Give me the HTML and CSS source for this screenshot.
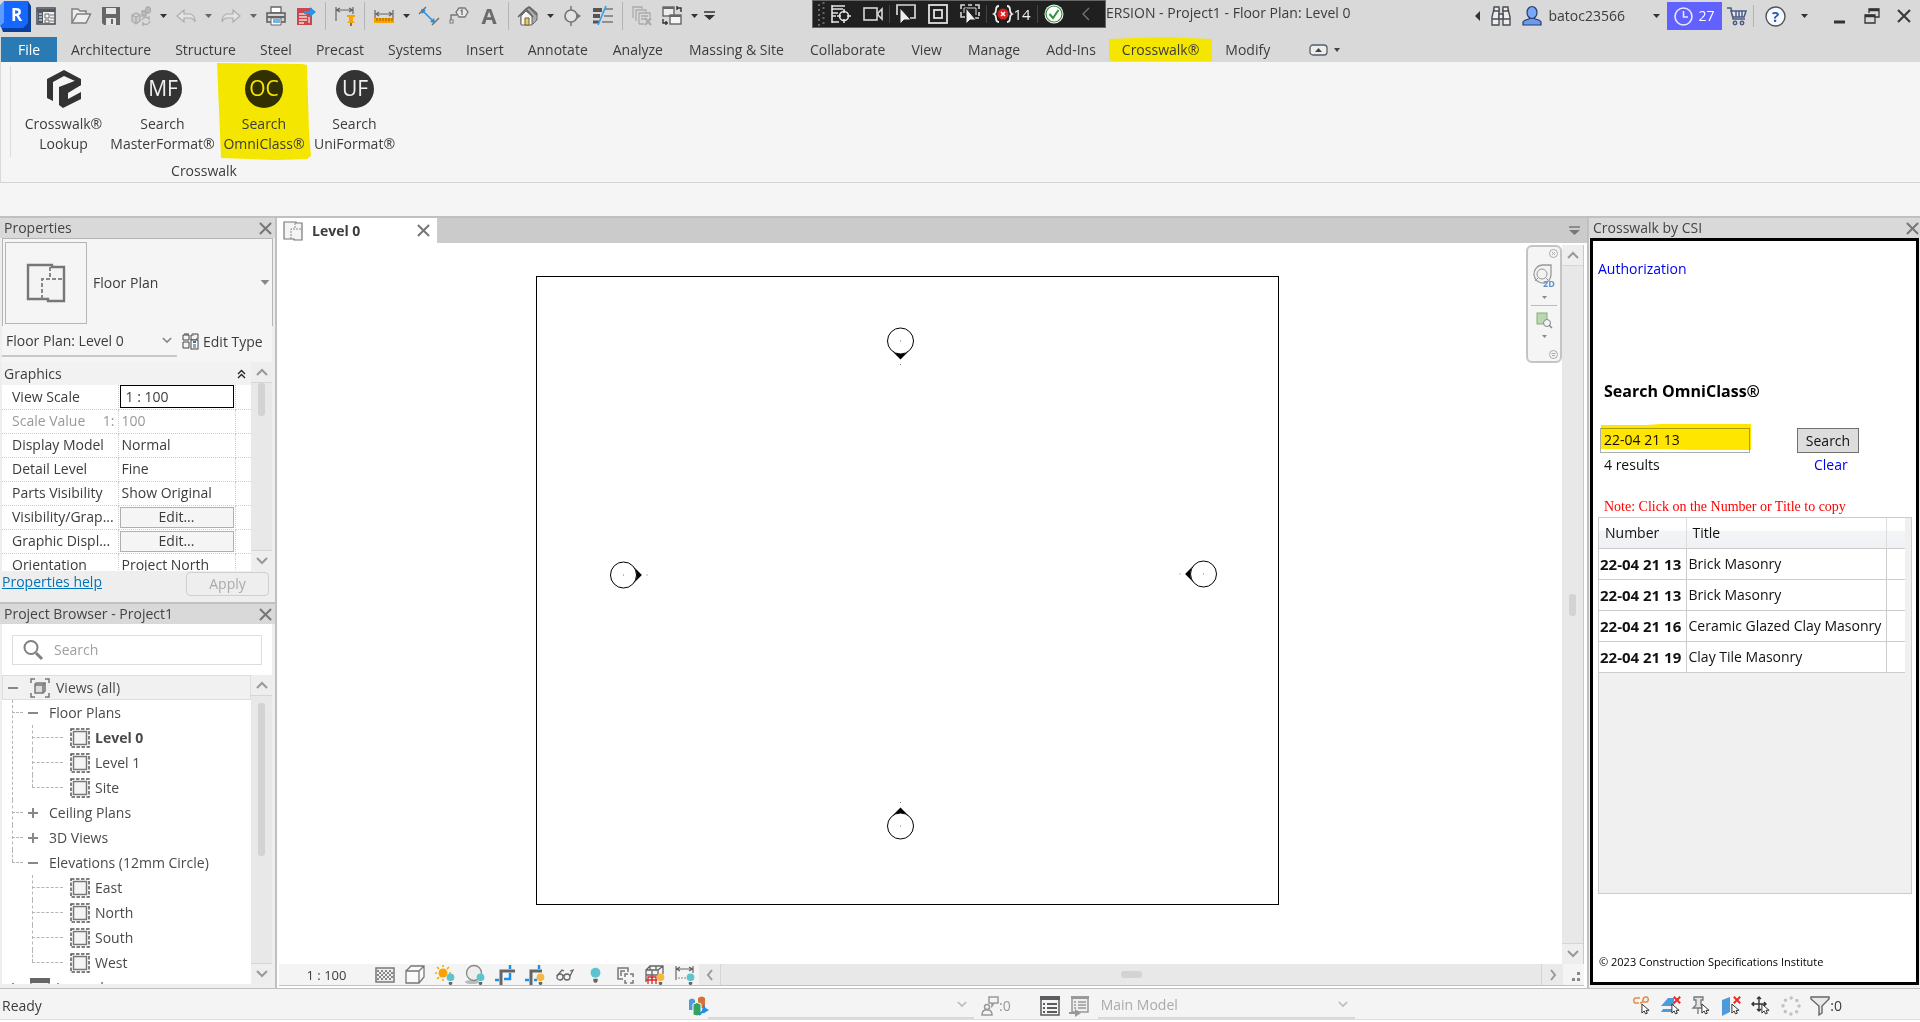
FILE: index.html
```html
<!DOCTYPE html>
<html lang="en">
<head>
  <meta charset="UTF-8">
  <title>Project1 - Floor Plan: Level 0</title>
  <meta name="viewport" content="width=device-width, initial-scale=1">
  <link rel="stylesheet" href="styles.css">
</head>
<body>
  <!-- shared icons -->
  <svg class="defs" aria-hidden="true">
    <symbol id="caret" viewBox="0 0 7 4"><path d="M0 0h7L3.500 4z" fill="currentColor"/></symbol>
    <symbol id="close" viewBox="0 0 14 14"><path d="M1 1l12 12M13 1L1 13" stroke="currentColor" stroke-width="2.200" fill="none"/></symbol>
    <symbol id="up" viewBox="0 0 12 8"><path d="M1 7l5-5 5 5" stroke="currentColor" stroke-width="2" fill="none"/></symbol>
    <symbol id="down" viewBox="0 0 12 8"><path d="M1 1l5 5 5-5" stroke="currentColor" stroke-width="2" fill="none"/></symbol>
    <symbol id="plan" viewBox="0 0 20 20"><path d="M1 1h12v1h6v17h-8v-1H1z" fill="#f4f4f4" stroke="#777" stroke-width="1.200"/><path d="M8 18V8h11M12 2v6" fill="none" stroke="#888" stroke-dasharray="2 1"/></symbol>
    <symbol id="view" viewBox="0 0 20 20"><rect x="1" y="1" width="18" height="18" fill="none" stroke="#555" stroke-width="1.500" stroke-dasharray="3.500 1.500"/><rect x="3.500" y="3.500" width="13" height="13" fill="#f4f4f4" stroke="#777" stroke-width="1.500"/></symbol>
    <symbol id="bulb" viewBox="0 0 10 14"><circle cx="5" cy="5" r="4.500" fill="currentColor"/><path d="M3 10.500h4v2L6 14H4l-1-1.500z" fill="#666"/></symbol>
    <symbol id="cursor" viewBox="0 0 10 13"><path d="M1 1v10l2.500-2.300L5 12l2-.8L5.600 8H9z" fill="#fff" stroke="#333" stroke-width="1.100"/></symbol>
    <symbol id="redx" viewBox="0 0 8 8"><path d="M.8.8l6.400 6.400M7.200.8L.8 7.200" stroke="#f02828" stroke-width="2"/></symbol>
  </svg>

  <header class="top">
    <div class="title-row">
      <div class="qat">
        <button class="logo" aria-label="Application menu">
          <svg width="31" height="31" viewBox="0 0 31 31"><path d="M3 4L7 0h21l3 5v26H3l-3-8z" fill="#0a3f9c"/><path d="M0 25V4l4-4v22z" fill="#5e9bff"/><path d="M4 0h24v22L23 27H2L0 25l4-3z" fill="#1667ff"/><text x="11" y="20" class="logo-letter">R</text></svg>
        </button>
        <button class="tool wide" aria-label="Home"><svg width="20" height="20" viewBox="0 0 20 20"><rect x="1" y="2" width="18" height="16" fill="#eee" stroke="#444b54" stroke-width="1.500"/><path d="M1 3h18v3H1zM2 6h5v11H2z" fill="#505864"/><path d="M3 8h3M3 11h3M3 14h3" stroke="#fff"/><path d="M9 8h4v4H9zM9 14h4v3H9z" fill="#fff" stroke="#666"/><path d="M14 9h4M14 12h4M14 15h4" stroke="#777"/></svg></button>
        <button class="tool" aria-label="Open"><svg width="20" height="20" viewBox="0 0 20 20"><path d="M1 17V3h6l2 2h6v3" fill="#eee" stroke="#808080" stroke-width="1.500"/><path d="M1 17L6 8h13.500L15 17z" fill="#eee" stroke="#808080" stroke-width="1.500"/></svg></button>
        <button class="tool" aria-label="Save"><svg width="20" height="20" viewBox="0 0 20 20"><path d="M1 1h18v18H3l-2-2z" fill="#666"/><path d="M5 2h10v6H5zM5 12h10v7H5z" fill="#e6e6e6"/><path d="M10 13h2v5h-2z" fill="#666"/></svg></button>
        <button class="tool" aria-label="Synchronize"><svg width="20" height="20" viewBox="0 0 20 20" fill="none" stroke="#acacac" stroke-width="1.300"><path d="M1 9l4-2 4 2v6l-4 3-4-3zM1 9l4 2 4-2M5 11v7" fill="#ccc"/><path d="M11 5h4v5h-4z" fill="#bbb"/><ellipse cx="17" cy="4" rx="2.500" ry="3" fill="#bbb"/><path d="M11 14a4 4 0 0 1 7-1v-3M19 15a4 4 0 0 1-7 2v3"/></svg></button>
        <button class="drop" aria-label="Synchronize options"><svg width="7" height="4"><use href="#caret"/></svg></button>
        <button class="tool" aria-label="Undo"><svg width="20" height="20" viewBox="0 0 20 20"><path d="M1 10l7-6v4h6q5 1 5 8-2-4-5-4H8v4z" fill="#e3e3e3" stroke="#adadad" stroke-width="1.200"/></svg></button>
        <button class="drop dim" aria-label="Undo list"><svg width="7" height="4"><use href="#caret"/></svg></button>
        <button class="tool" aria-label="Redo"><svg width="20" height="20" viewBox="0 0 20 20"><path d="M19 10l-7-6v4H6q-5 1-5 8 2-4 5-4h6v4z" fill="#e3e3e3" stroke="#adadad" stroke-width="1.200"/></svg></button>
        <button class="drop dim" aria-label="Redo list"><svg width="7" height="4"><use href="#caret"/></svg></button>
        <button class="tool" aria-label="Print"><svg width="20" height="20" viewBox="0 0 20 20"><path d="M5 1h10v6H5z" fill="#fff" stroke="#666" stroke-width="1.300"/><rect x="1" y="7" width="18" height="9" fill="#d5d5d5" stroke="#5b5b5b" stroke-width="1.500"/><path d="M1 11h18" stroke="#666" stroke-width="2"/><path d="M5 12h10v7H5z" fill="#fff" stroke="#666"/><path d="M7 13h7v4H7z" fill="#6bb7ef"/></svg></button>
        <button class="tool" aria-label="Export PDF"><svg width="20" height="20" viewBox="0 0 20 20"><path d="M1 2h15v17H1z" fill="#c9484d"/><path d="M3 8h7M3 11h8M3 14h8M3 17h5M13 11v6" stroke="#f7dada" stroke-width="1.300"/><path d="M8 5h6V1l6 5-6 5V8H8z" fill="#2693ea"/></svg></button>
        <span class="sep"></span>
        <button class="tool" aria-label="Aligned dimension"><svg width="20" height="20" viewBox="0 0 20 20" fill="none"><path d="M1 1v14M18 1v7M1 4h17M5 2L1.500 4 5 6M14 2l3.500 2L14 6" stroke="#666" stroke-width="1.200"/><path d="M12 9h8v2h-2v4l2 2h-8l2-2v-4h-2z" fill="#f7a400"/><path d="M16 17v3" stroke="#555" stroke-width="1.500"/></svg></button>
        <span class="sep"></span>
        <button class="tool" aria-label="Measure"><svg width="20" height="20" viewBox="0 0 20 20"><path d="M1 4v8M19 4v8M1 8h18M5 6L2 8l3 2M15 6l3 2-3 2" stroke="#666" stroke-width="1.200" fill="none"/><path d="M0 12h20v5H0z" fill="#f7a400"/><path d="M3 12v3M6 12v3M9 12v3M12 12v3M15 12v3M18 12v3" stroke="#8d5d00"/></svg></button>
        <button class="drop" aria-label="Measure options"><svg width="7" height="4"><use href="#caret"/></svg></button>
        <button class="tool" aria-label="Dimension"><svg width="20" height="20" viewBox="0 0 20 20" fill="none"><path d="M4 5l10 10" stroke="#1c8fe8" stroke-width="1.500"/><path d="M2 3l5 1-4 4zM16 17l-5-1 4-4z" fill="#1c8fe8"/><path d="M0 8l7-7M13 19l7-7" stroke="#707070" stroke-width="1.500"/></svg></button>
        <button class="tool" aria-label="Tag by category"><svg width="20" height="20" viewBox="0 0 20 20"><path d="M2 16V9h6" fill="none" stroke="#777" stroke-width="1.400"/><rect x="1" y="14" width="3" height="3" fill="#eee" stroke="#777"/><path d="M10 2h6l3 4-3 5h-6L7 6z" fill="#e7e7e7" stroke="#777" stroke-width="1.300"/><path d="M11.500 5L13 4v5" fill="none" stroke="#666" stroke-width="1.200"/></svg></button>
        <button class="tool" aria-label="Text"><svg width="20" height="20" viewBox="0 0 20 20"><text x="10" y="18" text-anchor="middle" class="glyph-a">A</text></svg></button>
        <span class="sep"></span>
        <button class="tool" aria-label="Default 3D view"><svg width="20" height="20" viewBox="0 0 20 20"><path d="M3 9v9h12l4-4V7L12 1 8 3z" fill="#aaa" stroke="#666"/><path d="M3 10l5-5 6 5v9H3z" fill="#f5f5f5" stroke="#666"/><path d="M0 11l8-8 7 8M8 3l3-2 8 8" fill="none" stroke="#666" stroke-width="1.600"/><path d="M7 12h4v7H7z" fill="#eacb62" stroke="#6b6033"/></svg></button>
        <button class="drop" aria-label="View options"><svg width="7" height="4"><use href="#caret"/></svg></button>
        <button class="tool" aria-label="Section"><svg width="20" height="20" viewBox="0 0 20 20"><path d="M8 3l10 7-10 7z" fill="#777"/><circle cx="8" cy="10" r="6" fill="#e3e3e3" stroke="#777" stroke-width="1.700"/><path d="M8 0v4M8 16v4" stroke="#777" stroke-width="1.500"/></svg></button>
        <button class="tool" aria-label="Thin lines"><svg width="20" height="20" viewBox="0 0 20 20"><path d="M0 4h9M0 10h7" stroke="#555" stroke-width="4"/><path d="M0 16h6" stroke="#555" stroke-width="3"/><path d="M12 3h8M11 10h9M9 16h11" stroke="#777" stroke-width="1.300"/><path d="M13 0L5 19" stroke="#3a9fe8" stroke-width="1.700"/></svg></button>
        <span class="sep"></span>
        <button class="tool" aria-label="Close inactive views"><svg width="20" height="20" viewBox="0 0 20 20" fill="none" stroke="#ababab" stroke-width="1.300"><path d="M1 12V1h9v2M4 15V4h10v3"/><path d="M7 18V7h11v4M9 10h7M9 13h4M7 18h5"/><path d="M13 12l6 7M19 12l-6 7" stroke-width="2.200"/></svg></button>
        <button class="tool" aria-label="Switch windows"><svg width="20" height="20" viewBox="0 0 20 20"><rect x="1" y="1" width="11" height="9" fill="#eee" stroke="#666" stroke-width="1.400"/><rect x="8" y="9" width="11" height="9" fill="#f5f5f5" stroke="#666" stroke-width="1.400"/><path d="M8 10h11M1 2h11" stroke="#666" stroke-width="2"/><path d="M15 2h4v4M1 13v4h5M15 0v4M4 15v4" fill="none" stroke="#333" stroke-width="1.400"/></svg></button>
        <button class="drop" aria-label="Window list"><svg width="7" height="4"><use href="#caret"/></svg></button>
        <button class="drop" aria-label="Customize toolbar"><svg width="11" height="10" viewBox="0 0 11 10"><path d="M0 1h11" stroke="#333" stroke-width="1.500"/><path d="M0 4h11L5.500 9z" fill="#333"/></svg></button>
      </div>

      <div class="recorder">
        <svg class="grip" width="7" height="24" viewBox="0 0 7 24"><path d="M1 2v22M5.500 0v24" stroke="#666" stroke-width="2" stroke-dasharray="2 3"/></svg>
        <button aria-label="Capture settings"><svg width="20" height="20" viewBox="0 0 20 20" fill="none" stroke="#e4e4e4" stroke-width="1.600"><path d="M1 2h13M1 5h11M1 9h6M1 12h4M1 18h7M1 1v18" /><circle cx="13" cy="12" r="4.500"/><path d="M13 5v4M13 15v4M6 12h4M16 12h4"/></svg></button>
        <button aria-label="Record video"><svg width="20" height="20" viewBox="0 0 20 20" fill="none" stroke="#d8d8d8" stroke-width="1.600"><rect x="1" y="4" width="13" height="12"/><path d="M15 9l4-4v10l-4-4z"/></svg></button>
        <span class="rec-sep"></span>
        <button aria-label="Capture window"><svg width="20" height="20" viewBox="0 0 20 20"><path d="M1 11V1h18v13h-5" fill="none" stroke="#d8d8d8" stroke-width="1.700"/><path d="M4 4v16l4-4h7z" fill="#eee" stroke="#202020"/></svg></button>
        <button aria-label="Capture area"><svg width="20" height="20" viewBox="0 0 20 20" fill="none" stroke="#e0e0e0" stroke-width="1.800"><rect x="1" y="1" width="18" height="18"/><rect x="6" y="6" width="8" height="8"/></svg></button>
        <button aria-label="Capture selection"><svg width="20" height="20" viewBox="0 0 20 20"><path d="M1 5V1h4M8 1h4M15 1h4v4M19 8v4M1 8v5h4M15 14h4" fill="none" stroke="#d8d8d8" stroke-width="1.600"/><path d="M4 9V4h12v7" fill="none" stroke="#d8d8d8"/><path d="M6 4v16l4-4h6z" fill="#eee" stroke="#202020"/></svg></button>
        <span class="rec-sep"></span>
        <button class="errors" aria-label="14 errors"><svg width="20" height="20" viewBox="0 0 20 20"><path d="M6 2Q3 2 3 6q0 3-2 4 2 1 2 4 0 4 3 4M14 2q3 0 3 4 0 3 2 4-2 1-2 4 0 4-3 4" fill="none" stroke="#eee" stroke-width="1.800"/><circle cx="10" cy="10" r="5.500" fill="#e02020"/><path d="M8 8l4 4M12 8l-4 4" stroke="#fff" stroke-width="1.500"/></svg>14</button>
        <span class="rec-sep"></span>
        <button aria-label="Done"><svg width="20" height="20" viewBox="0 0 20 20"><circle cx="10" cy="10" r="9.500" fill="#fff"/><circle cx="10" cy="10" r="8" fill="#fff" stroke="#32953b" stroke-width="1.200"/><path d="M5.500 10l3.500 4 5.500-8" fill="none" stroke="#32953b" stroke-width="2"/></svg></button>
        <button aria-label="Collapse"><svg width="8" height="14" viewBox="0 0 8 14"><path d="M7 1L1 7l6 6" fill="none" stroke="#777" stroke-width="1.300"/></svg></button>
      </div>

      <p class="doc-title">ERSION - Project1 - Floor Plan: Level 0</p>

      <div class="account">
        <button class="collapse" aria-label="Collapse info"><svg width="5" height="10" viewBox="0 0 5 10"><path d="M5 0v10L0 5z" fill="#333"/></svg></button>
        <button aria-label="Find"><svg width="20" height="20" viewBox="0 0 20 20" fill="#eee" stroke="#4a4f55" stroke-width="1.400"><path d="M3 3l-2 8v8h7V3zM17 3l2 8v8h-7V3z"/><path d="M3 1h5v4H3zM12 1h5v4h-5zM8 8h4v5H8zM1 13h7M12 13h7"/></svg></button>
        <button class="user"><svg width="20" height="20" viewBox="0 0 20 20"><path d="M1 19v-3q1-2 6-3l1-2h4l1 2q5 1 6 3v3z" fill="#6b9af0" stroke="#263c68" stroke-width="1.200"/><ellipse cx="10" cy="6.500" rx="5" ry="6" fill="#79a6f7" stroke="#263c68" stroke-width="1.200"/></svg>batoc23566</button>
        <button class="drop" aria-label="Account menu"><svg width="7" height="4"><use href="#caret"/></svg></button>
        <button class="trial"><svg width="19" height="19" viewBox="0 0 19 19" fill="none" stroke="#e8e8ff" stroke-width="1.600"><circle cx="9.500" cy="9.500" r="8.500"/><path d="M9.500 4v6H14"/></svg>27</button>
        <button aria-label="Store"><svg width="20" height="20" viewBox="0 0 20 20" fill="none" stroke="#4c5b84" stroke-width="1.500"><path d="M0 2h4l2 11h12"/><path d="M4 5h15l-2 6H6zM9 5v6M12 5v6M15 5v6" fill="#e5eaf5"/><circle cx="8" cy="17" r="1.700"/><circle cx="15" cy="17" r="1.700"/></svg></button>
        <span class="sep"></span>
        <button aria-label="Help"><svg width="21" height="21" viewBox="0 0 21 21"><circle cx="10.500" cy="10.500" r="9.500" fill="#f7f9fc" stroke="#4a5460" stroke-width="1.400"/><text x="10.500" y="16" text-anchor="middle" class="glyph-q">?</text></svg></button>
        <button class="drop" aria-label="Help menu"><svg width="7" height="4"><use href="#caret"/></svg></button>
        <div class="window-buttons">
          <button aria-label="Minimize"><svg width="16" height="16" viewBox="0 0 16 16"><path d="M3 14h11" stroke="#333" stroke-width="3"/></svg></button>
          <button aria-label="Restore"><svg width="16" height="16" viewBox="0 0 16 16" fill="none" stroke="#333" stroke-width="1.300"><path d="M5 5V1h10v8h-4"/><path d="M5 2h10M1 8h10" stroke-width="2.500"/><path d="M1 7h10v8H1z"/></svg></button>
          <button aria-label="Close"><svg width="14" height="14"><use href="#close"/></svg></button>
        </div>
      </div>
    </div>

    <nav class="tabs">
      <a href="#" class="file">File</a>
      <a href="#">Architecture</a>
      <a href="#">Structure</a>
      <a href="#">Steel</a>
      <a href="#">Precast</a>
      <a href="#">Systems</a>
      <a href="#">Insert</a>
      <a href="#">Annotate</a>
      <a href="#">Analyze</a>
      <a href="#">Massing &amp; Site</a>
      <a href="#">Collaborate</a>
      <a href="#">View</a>
      <a href="#">Manage</a>
      <a href="#">Add-Ins</a>
      <a href="#" class="active">Crosswalk®</a>
      <a href="#">Modify</a>
      <button class="panel-toggle" aria-label="Ribbon display"><svg width="30" height="12" viewBox="0 0 30 12"><rect x="1" y="1" width="17" height="10" rx="3" fill="#eee" stroke="#555f6a" stroke-width="1.300"/><path d="M6 8l3.500-4L13 8zM25 4h6l-3 4z" fill="#444"/></svg></button>
    </nav>
  </header>

  <section class="ribbon">
    <div class="ribbon-body">
      <div class="ribbon-panel">
        <div class="ribbon-buttons">
          <button class="lookup"><svg width="38" height="38" viewBox="0 0 38 38" fill="#333"><path d="M2 9L19 0l17 9v6l-6 3V11L19 6 8 12v19l-6-3z"/><path d="M14 17l18-7 4 5-13 8v6l13-7v7L18 38l-4-3z"/></svg><span>Crosswalk®<br>Lookup</span></button>
          <button class="master"><svg width="38" height="38" viewBox="0 0 38 38"><circle cx="19" cy="19" r="19" fill="#333"/><text x="19" y="26" class="badge">MF</text></svg><span>Search<br>MasterFormat®</span></button>
          <button class="omni"><svg width="38" height="38" viewBox="0 0 38 38"><circle cx="19" cy="19" r="19" fill="#323000"/><text x="19" y="26" class="badge">OC</text></svg><span>Search<br>OmniClass®</span></button>
          <button class="uni"><svg width="38" height="38" viewBox="0 0 38 38"><circle cx="19" cy="19" r="19" fill="#333"/><text x="19" y="26" class="badge">UF</text></svg><span>Search<br>UniFormat®</span></button>
        </div>
        <h2>Crosswalk</h2>
      </div>
    </div>
  </section>

  <main>
    <aside class="dock-left">
      <section class="properties">
        <header class="dock-title"><h2>Properties</h2><button aria-label="Close Properties"><svg width="13" height="13"><use href="#close"/></svg></button></header>
        <button class="type-selector">
          <span class="thumb"><svg width="40" height="40"><use href="#plan"/></svg></span>
          <span>Floor Plan</span>
          <svg width="10" height="5"><use href="#caret"/></svg>
        </button>
        <div class="instance">
          <div class="combo">
            <select aria-label="Instance"><option>Floor Plan: Level 0</option></select>
            <svg width="10" height="7"><use href="#down"/></svg>
          </div>
          <button class="edit-type"><svg width="17" height="17" viewBox="0 0 17 17" fill="#f4f4f4" stroke="#444"><path d="M1 2h6v5H1zM9 2h6v5H9zM1 9h6v6H1z"/><path d="M2 1h5M10 1h6v5"/><rect x="9" y="7" width="7" height="9" fill="#fff"/><path d="M11 9h3" stroke="#2475c8" stroke-width="2"/><path d="M11 12h3M11 14h3"/></svg>Edit Type</button>
        </div>
        <div class="props">
          <div class="props-view">
            <div class="group">Graphics<svg width="9" height="10" viewBox="0 0 9 10" fill="none" stroke="#222" stroke-width="1.300"><path d="M1 5l3.500-3.500L8 5M1 9l3.500-3.500L8 9"/></svg></div>
            <table>
              <tr><th>View Scale</th><td class="field"><input value="1 : 100" aria-label="View Scale"></td><td></td></tr>
              <tr class="off"><th><span class="pair">Scale Value<span>1:</span></span></th><td>100</td><td></td></tr>
              <tr><th>Display Model</th><td>Normal</td><td></td></tr>
              <tr><th>Detail Level</th><td>Fine</td><td></td></tr>
              <tr><th>Parts Visibility</th><td>Show Original</td><td></td></tr>
              <tr><th>Visibility/Grap...</th><td class="field"><button>Edit...</button></td><td></td></tr>
              <tr><th>Graphic Displ...</th><td class="field"><button>Edit...</button></td><td></td></tr>
              <tr><th>Orientation</th><td>Project North</td><td></td></tr>
            </table>
          </div>
          <div class="scroll">
            <button aria-label="Scroll up"><svg width="12" height="8"><use href="#up"/></svg></button>
            <div class="track"><span class="thumb-short"></span></div>
            <button aria-label="Scroll down"><svg width="12" height="8"><use href="#down"/></svg></button>
          </div>
        </div>
        <div class="props-foot"><a href="#">Properties help</a><button disabled>Apply</button></div>
      </section>

      <section class="browser">
        <header class="dock-title"><h2>Project Browser - Project1</h2><button aria-label="Close Project Browser"><svg width="13" height="13"><use href="#close"/></svg></button></header>
        <div class="browser-body">
          <label class="search"><svg width="20" height="20" viewBox="0 0 20 20" fill="none" stroke="#808080"><circle cx="8" cy="7.500" r="6.500" stroke-width="2"/><path d="M13 13l6 6" stroke-width="3"/></svg><input type="search" placeholder="Search" aria-label="Search views"></label>
          <div class="tree-wrap">
            <ul class="tree">
              <li>
                <div class="root selected"><i class="minus"></i><svg width="20" height="20" viewBox="0 0 20 20" fill="none" stroke="#777" stroke-width="1.500"><path d="M1 5V1h4M15 1h4v4M19 15v4h-4M5 19H1v-4"/><path d="M5 7q0-2 2-2h8v8l-2 2H5z" fill="#ddd"/><path d="M5 7h8v8M13 7l2-2"/></svg>Views (all)</div>
                <ul class="branch">
                  <li><div class="node"><i class="minus"></i>Floor Plans</div>
                    <ul class="leaves">
                      <li class="current"><svg width="20" height="20"><use href="#view"/></svg>Level 0</li>
                      <li><svg width="20" height="20"><use href="#view"/></svg>Level 1</li>
                      <li><svg width="20" height="20"><use href="#view"/></svg>Site</li>
                    </ul>
                  </li>
                  <li><div class="node"><i class="minus plus"></i>Ceiling Plans</div></li>
                  <li><div class="node"><i class="minus plus"></i>3D Views</div></li>
                  <li><div class="node"><i class="minus"></i>Elevations (12mm Circle)</div>
                    <ul class="leaves">
                      <li><svg width="20" height="20"><use href="#view"/></svg>East</li>
                      <li><svg width="20" height="20"><use href="#view"/></svg>North</li>
                      <li><svg width="20" height="20"><use href="#view"/></svg>South</li>
                      <li><svg width="20" height="20"><use href="#view"/></svg>West</li>
                    </ul>
                  </li>
                </ul>
              </li>
              <li><div class="root"><i class="minus plus"></i><svg width="20" height="20" viewBox="0 0 20 20"><path d="M1 1h18v18H1z" fill="#f4f4f4" stroke="#666"/><path d="M0 0h20v5H0z" fill="#666"/></svg>Legends</div></li>
            </ul>
            <div class="scroll">
              <button aria-label="Scroll up"><svg width="12" height="8"><use href="#up"/></svg></button>
              <div class="track"><span class="thumb-long"></span></div>
              <button aria-label="Scroll down"><svg width="12" height="8"><use href="#down"/></svg></button>
            </div>
          </div>
        </div>
      </section>
    </aside>

    <section class="workspace">
      <div class="doc-tabs">
        <div class="doc-tab"><svg width="20" height="20"><use href="#plan"/></svg><span>Level 0</span><button aria-label="Close Level 0"><svg width="13" height="13"><use href="#close"/></svg></button></div>
        <button class="tab-list" aria-label="Open tabs"><svg width="11" height="10" viewBox="0 0 11 10"><path d="M0 1h11" stroke="#777" stroke-width="1.500"/><path d="M0 4h11L5.500 9z" fill="#777"/></svg></button>
      </div>
      <div class="canvas-row">
        <div class="canvas">
          <!-- crop region and the four elevation markers -->
          <svg viewBox="0 0 1284 721">
            <symbol id="elev" viewBox="-20 -20 40 48"><path d="M-9.200 9.200L0 18.400 9.200 9.200A13 13 0 0 1-9.200 9.200z"/><circle r="13" fill="#fff" stroke="#000"/><path d="M-.5-.5h1v1h-1zM-.5 23h1v1h-1z" fill="#777"/></symbol>
            <path d="M258.500 33.500h742v628h-742z" fill="none" stroke="#000" shape-rendering="crispEdges"/>
            <use href="#elev" x="603" y="78" width="40" height="48"/>
            <use href="#elev" x="-20" y="-20" width="40" height="48" transform="translate(346 332) rotate(-90)"/>
            <use href="#elev" x="-20" y="-20" width="40" height="48" transform="translate(926 331) rotate(90)"/>
            <use href="#elev" x="-20" y="-20" width="40" height="48" transform="translate(623 583) rotate(180)"/>
          </svg>
          <div class="navbar">
            <button class="corner" aria-label="Close navigation bar"><svg width="9" height="9" viewBox="0 0 9 9" fill="none" stroke="#aaa"><circle cx="4.500" cy="4.500" r="4"/><path d="M3 3l3 3M6 3L3 6"/></svg></button>
            <button aria-label="2D wheel"><svg width="24" height="26" viewBox="0 0 24 26"><path d="M10 1h9v10a9 9 0 0 1-7 8A9 9 0 1 1 10 1z" fill="#f2f2f2" stroke="#999" stroke-width="1.300"/><circle cx="10" cy="10" r="5" fill="none" stroke="#999"/><path d="M6 14l-3 3M14 14l2 2" stroke="#999"/><text x="11" y="23" class="glyph-2d">2D</text></svg></button>
            <button aria-label="Wheel options"><svg width="5" height="3"><use href="#caret"/></svg></button>
            <hr>
            <button aria-label="Zoom region"><svg width="17" height="17" viewBox="0 0 17 17"><rect x="1" y="1" width="10" height="11" fill="#bcd6b0" stroke="#86b076"/><circle cx="11" cy="11" r="3.500" fill="#f4f4f4" stroke="#888"/><path d="M13 13l3 3" stroke="#888" stroke-width="1.500"/></svg></button>
            <button aria-label="Zoom options"><svg width="5" height="3"><use href="#caret"/></svg></button>
            <button class="corner end" aria-label="Customize"><svg width="9" height="9" viewBox="0 0 9 9" fill="none" stroke="#aaa"><circle cx="4.500" cy="4.500" r="4"/><path d="M2.500 3.500h4M3 5.500h3"/></svg></button>
          </div>
        </div>
        <div class="scroll">
          <button aria-label="Scroll up"><svg width="12" height="8"><use href="#up"/></svg></button>
          <div class="track centered"><span></span></div>
          <button aria-label="Scroll down"><svg width="12" height="8"><use href="#down"/></svg></button>
        </div>
      </div>
      <div class="view-bar">
        <button class="scale">1 : 100</button>
        <button class="vb" aria-label="Detail level"><svg width="20" height="16" viewBox="0 0 20 16"><rect x="1" y="1" width="18" height="14" fill="#eee" stroke="#777" stroke-width="1.500"/><path d="M2 4h16M4 6h14M2 8h16M4 10h14M2 12h16" stroke="#888" stroke-width="2" stroke-dasharray="2 2"/></svg></button>
        <button class="vb" aria-label="Visual style"><svg width="20" height="20" viewBox="0 0 20 20" fill="#fafafa" stroke="#777" stroke-width="1.300"><path d="M1 6q0-1 1-1l4-4h13v11l-5 6H1zM1 6h13v12M14 6l5-5"/></svg></button>
        <button class="vb" aria-label="Sun path"><svg width="20" height="20" viewBox="0 0 20 20"><circle cx="8" cy="8" r="4.500" fill="#f9a200"/><path d="M8 0v2M8 14v2M0 8h2M14 8h2M2 2l2 2M12 4l2-2M2 14l2-2" stroke="#f9a200" stroke-width="1.500"/><use href="#bulb" x="11" y="8" width="9" height="12" class="teal"/></svg></button>
        <button class="vb" aria-label="Shadows"><svg width="20" height="20" viewBox="0 0 20 20"><ellipse cx="7" cy="17" rx="7" ry="2" fill="#bbb"/><circle cx="9" cy="8" r="7.500" fill="#eee" stroke="#888" stroke-width="1.300"/><use href="#bulb" x="11" y="8" width="9" height="12" class="teal"/></svg></button>
        <button class="vb" aria-label="Crop view"><svg width="20" height="20" viewBox="0 0 20 20" fill="none"><path d="M6 20V6h14" stroke="#666" stroke-width="3"/><path d="M15 0v4M15 8v6H9M4 15H0" stroke="#1c8fe8" stroke-width="2.500"/></svg></button>
        <button class="vb" aria-label="Show crop region"><svg width="20" height="20" viewBox="0 0 20 20" fill="none"><path d="M6 20V6h11" stroke="#666" stroke-width="3"/><path d="M14 0v4M9 15h3M4 15H0" stroke="#1c8fe8" stroke-width="2.500"/><use href="#bulb" x="11" y="8" width="9" height="12" class="amber"/></svg></button>
        <button class="vb" aria-label="Temporary hide"><svg width="18" height="14" viewBox="0 0 18 14" fill="none" stroke="#666" stroke-width="1.300"><circle cx="4" cy="9" r="3"/><circle cx="11" cy="9" r="3"/><path d="M7 8q.5-1 1 0M1 8L6 2l2 1M14 8l3-6-3 1"/></svg></button>
        <button class="vb" aria-label="Reveal hidden"><svg class="teal" width="11" height="16"><use href="#bulb"/></svg></button>
        <button class="vb" aria-label="Temporary view properties"><svg width="18" height="18" viewBox="0 0 18 18" fill="none" stroke="#777" stroke-width="1.500"><path d="M7 13H2V2h10v4M5 10V5h4"/><path d="M9 11V8h3M14 8h3v3M17 14v3h-3M11 17H9v-3"/></svg></button>
        <button class="vb" aria-label="Analytical model"><svg width="20" height="20" viewBox="0 0 20 20" fill="none"><path d="M1 17V5l4-4h13v8M1 5h12l5-4M7 5v10M13 5v5M5 1v4M11 1v4M1 10h13" stroke="#666" stroke-width="1.300"/><path d="M3 19v-7h8v7M7 12v7M1 15h11" stroke="#d82c2c" stroke-width="1.300"/><use href="#bulb" x="11" y="8" width="9" height="12" class="amber"/></svg></button>
        <button class="vb" aria-label="Reveal constraints"><svg width="20" height="20" viewBox="0 0 20 20" fill="none"><path d="M1 1v14M18 1v7M1 4h17M5 2L1.500 4 5 6M14 2l3.500 2L14 6" stroke="#666" stroke-width="1.200"/><path d="M3 13h8" stroke="#888" stroke-dasharray="2 1"/><use href="#bulb" x="11" y="8" width="9" height="12" class="teal"/></svg></button>
        <button class="hs" aria-label="Scroll left"><svg width="8" height="12" viewBox="0 0 8 12"><path d="M6 1L2 6l4 5" stroke="currentColor" stroke-width="2" fill="none"/></svg></button>
        <div class="hs-track"><span></span></div>
        <button class="hs" aria-label="Scroll right"><svg width="8" height="12" viewBox="0 0 8 12"><path d="M2 1l4 5-4 5" stroke="currentColor" stroke-width="2" fill="none"/></svg></button>
        <svg class="resize" width="21" height="20" viewBox="0 0 21 20" fill="#888"><path d="M14 8h3v3h-3zM14 14h3v3h-3zM9 14h3v3H9z"/></svg>
      </div>
    </section>

    <aside class="dock-right">
      <header class="dock-title"><h2>Crosswalk by CSI</h2><button aria-label="Close Crosswalk"><svg width="13" height="13"><use href="#close"/></svg></button></header>
      <div class="csi">
        <a href="#">Authorization</a>
        <h3>Search OmniClass®</h3>
        <form class="lookup-form">
          <div class="query"><input type="text" value="22-04 21 13" aria-label="OmniClass number"></div>
          <button type="button">Search</button>
          <p>4 results</p>
          <a href="#">Clear</a>
        </form>
        <p class="note">Note: Click on the Number or Title to copy</p>
        <div class="results">
          <table>
            <thead><tr><th>Number</th><th>Title</th><th></th></tr></thead>
            <tbody>
              <tr><td>22-04 21 13</td><td>Brick Masonry</td><td></td></tr>
              <tr><td>22-04 21 13</td><td>Brick Masonry</td><td></td></tr>
              <tr><td>22-04 21 16</td><td>Ceramic Glazed Clay Masonry</td><td></td></tr>
              <tr><td>22-04 21 19</td><td>Clay Tile Masonry</td><td></td></tr>
            </tbody>
          </table>
        </div>
        <footer>© 2023 Construction Specifications Institute</footer>
      </div>
    </aside>
  </main>

  <footer class="status">
    <span class="ready">Ready</span>
    <div class="worksets">
      <button aria-label="Worksets"><svg width="20" height="20" viewBox="0 0 20 20"><path d="M1 4q3-3 6 0v10H1z" fill="#4e9bdb"/><path d="M10 2q4-3 7 0v10h-7z" fill="#d8703c"/><path d="M5 8q4-3 8 0v11q-4 2-8 0z" fill="#33a45b" stroke="#fff"/><path d="M11 19l5-5M15 14l1-3 1 2 2 1-3 2z" stroke="#1c8fe8" stroke-width="2" fill="#1c8fe8"/></svg></button>
      <div class="combo"><select aria-label="Active workset"><option></option></select><svg width="10" height="7"><use href="#down"/></svg></div>
      <button class="requests"><svg width="18" height="20" viewBox="0 0 18 20" fill="none" stroke="#999" stroke-width="1.500"><path d="M8 1h9v6h-4l-2 3V7H8z"/><circle cx="6" cy="11" r="2.500"/><path d="M1 19q0-4 3-5h4q3 1 3 5z"/></svg>:0</button>
      <button class="opt" aria-label="Design options"><svg width="20" height="20" viewBox="0 0 20 20"><rect x="1" y="1" width="18" height="18" fill="#f4f4f4" stroke="#5b5b5f" stroke-width="1.500"/><path d="M0 0h20v4H0z" fill="#5b5b5f"/><path d="M3 8h2M3 12h2M3 16h2M7 8h10M7 12h10M7 16h10" stroke="#5b5b5f" stroke-width="2"/></svg></button>
      <button class="opt" aria-label="Add to option set"><svg width="20" height="20" viewBox="0 0 20 20"><rect x="3" y="1" width="16" height="15" fill="#eee" stroke="#999" stroke-width="1.500"/><path d="M2 0h18v3H2z" fill="#999"/><path d="M5 6h2M5 9h2M5 12h2M9 6h8M9 9h8M9 12h8" stroke="#999" stroke-width="1.500"/><path d="M0 16h6v-3l6 4-6 4v-3H0z" fill="#999"/></svg></button>
      <div class="combo model"><select aria-label="Design option" disabled><option>Main Model</option></select><svg width="10" height="7"><use href="#down"/></svg></div>
    </div>
    <div class="selection">
      <button aria-label="Select links"><svg width="20" height="20" viewBox="0 0 20 20"><path d="M9 2H4a3 3 0 0 0 0 5h4M9 7q3 0 3-3t3-3h1a3 3 0 0 1 0 5h-4" fill="none" stroke="#e58b48" stroke-width="1.500"/><use href="#cursor" x="10" y="7" width="9" height="12"/></svg></button>
      <button aria-label="Select underlay"><svg width="20" height="20" viewBox="0 0 20 20"><path d="M0 10l7-8h6v8zM2 13h10v3H0z" fill="#4e9bdb"/><use href="#redx" x="12" y="0" width="8" height="8"/><use href="#cursor" x="10" y="7" width="9" height="12"/></svg></button>
      <button aria-label="Select pinned"><svg width="20" height="20" viewBox="0 0 20 20"><path d="M3 1h9v3h-2v5l3 3H2l3-3V4H3zM7 12v6" fill="#e4e4e4" stroke="#777" stroke-width="1.300"/><use href="#cursor" x="10" y="7" width="9" height="12"/></svg></button>
      <button aria-label="Select by face"><svg width="20" height="20" viewBox="0 0 20 20"><path d="M1 4l8-3v15l-8 4z" fill="#4e9bdb"/><use href="#redx" x="12" y="0" width="8" height="8"/><use href="#cursor" x="10" y="7" width="9" height="12"/></svg></button>
      <button aria-label="Drag on selection"><svg width="20" height="20" viewBox="0 0 20 20"><path d="M8 1v14M1 8h14M6 3l2-2 2 2M6 13l2 2 2-2M3 6L1 8l2 2M13 6l2 2-2 2" fill="none" stroke="#333" stroke-width="1.400"/><use href="#cursor" x="10" y="7" width="9" height="12"/></svg></button>
      <button aria-label="Background processes"><svg width="20" height="20" viewBox="0 0 20 20"><circle cx="10" cy="10" r="8" fill="none" stroke="#c2c2c2" stroke-width="3.600" stroke-linecap="round" stroke-dasharray="0 6.280"/></svg></button>
      <button class="filter"><svg width="20" height="20" viewBox="0 0 20 20"><path d="M1 1h18v2l-7 7v7l-3 2v-9L1 3z" fill="#e9e9e9" stroke="#666" stroke-width="1.400"/></svg>:0</button>
    </div>
  </footer>
</body>
</html>
```
FILE: styles.css
```css
* {
  box-sizing: border-box;
}

body {
  margin: 0;
  height: 100vh;
  padding-bottom: 2px;
  display: flex;
  flex-direction: column;
  background: #fff;
  color: #3c3c3c;
  font: 14px/20px "Open Sans", "Noto Sans", sans-serif;
  overflow: hidden;
}

h2, h3, p, ul {
  margin: 0;
  padding: 0;
  font-size: 14px;
  font-weight: normal;
}

ul {
  list-style: none;
}

svg {
  display: block;
  flex: none;
  overflow: visible;
}

a {
  text-decoration: none;
}

button, input, select {
  margin: 0;
  padding: 0;
  border: 0;
  border-radius: 0;
  background: none;
  color: inherit;
  font: inherit;
}

button {
  display: flex;
  align-items: center;
  justify-content: center;
  white-space: nowrap;
}

select {
  appearance: none;
  opacity: 1;
}

.defs {
  position: absolute;
  width: 0;
  height: 0;
}

/* title bar */
.top {
  flex: none;
  background: #d9d9d9;
}

.title-row {
  display: flex;
  height: 37px;
}

.qat, .account {
  display: flex;
  align-items: center;
  height: 32px;
}

.qat {
  flex: none;
  width: 812px;
}

.logo {
  height: 31px;
}

.logo-letter {
  font: bold 17px "Open Sans", sans-serif;
  fill: #fff;
}

.tool {
  width: 30px;
}

.tool.wide {
  margin-right: 5px;
}

.drop {
  width: 15px;
  color: #333;
}

.drop.dim {
  color: #666;
}

.sep {
  width: 1px;
  height: 28px;
  margin: 0 4px;
  background: #b4b4b4;
}

.glyph-a {
  font: bold 22px "Open Sans", sans-serif;
  fill: #6b6b6b;
}

.glyph-q {
  font: bold 15px "Open Sans", sans-serif;
  fill: #2458b8;
}

.glyph-2d {
  font: bold 9px "Open Sans", sans-serif;
  fill: #5c92cc;
}

.recorder {
  flex: none;
  display: flex;
  align-items: center;
  width: 294px;
  height: 28px;
  padding-left: 5px;
  background: #202020;
  border: 1px solid #666;
  color: #f0f0f0;
}

.recorder button {
  width: 32px;
}

.recorder .errors {
  width: 50px;
  font-size: 15px;
}

.rec-sep {
  width: 1px;
  height: 18px;
  background: #444;
}

.doc-title {
  flex: 1;
  line-height: 26px;
  white-space: nowrap;
}

.account {
  flex: none;
  padding-right: 9px;
}

.account > button {
  margin-right: 11px;
}

.account .user {
  gap: 7px;
  margin-right: 24px;
}

.account .drop {
  margin-right: 3px;
}

.account .trial {
  width: 55px;
  height: 28px;
  gap: 5px;
  margin-right: 5px;
  background: #6161ff;
  color: #fff;
}

.account .sep {
  margin: 0 11px 0 1px;
  height: 22px;
}

.account > button:nth-of-type(6) {
  margin-right: 5px;
}

.window-buttons {
  display: flex;
  gap: 17px;
  margin-left: 16px;
}

/* ribbon tabs */
.tabs {
  display: flex;
  height: 25px;
  padding-left: 1px;
  line-height: 25px;
}

.tabs a {
  padding: 0 12px;
  color: #3c3c3c;
  white-space: nowrap;
}

.tabs a:nth-child(n+9) {
  padding: 0 13px;
}

.tabs .file {
  width: 56px;
  margin-right: 2px;
  padding: 0;
  background: #2a7ab3;
  color: #fff;
  text-align: center;
}

.tabs .active {
  background: #f5e600;
  clip-path: polygon(0 2px, 50% 0, 100% 2px, 100% 24px, 4px 24px, 0 23px);
}

.panel-toggle {
  margin-left: 26px;
}

/* ribbon */
.ribbon {
  flex: none;
  height: 156px;
  background: #f5f5f5;
  border-bottom: 2px solid #c0c0c0;
}

.ribbon-body {
  height: 121px;
  padding-left: 9px;
  border-left: 1px solid #d9d9d9;
  border-bottom: 1px solid #d5d5d5;
}

.ribbon-panel {
  width: 388px;
}

.ribbon-panel h2 {
  text-align: center;
}

.ribbon-buttons {
  display: flex;
  height: 99px;
}

.ribbon-buttons button {
  flex-direction: column;
  justify-content: flex-start;
  gap: 6px;
  padding-top: 8px;
  line-height: 20px;
}

.ribbon-buttons .lookup {
  width: 98px;
  padding-left: 8px;
  border-left: 1px solid #dcdcdc;
  clip-path: inset(4px 0 4px 0);
}

.ribbon-buttons .master {
  width: 109px;
}

.ribbon-buttons .omni {
  width: 94px;
  background: #f5e600;
  clip-path: polygon(0 1px, 85px 2px, 90px 3px, 92px 70px, 94px 94px, 90px 97px, 60px 98px, 4px 96px);
}

.ribbon-buttons .uni {
  width: 87px;
}

.badge {
  font: 21px "Open Sans", sans-serif;
  text-anchor: middle;
  fill: #f0f0f0;
}

.omni .badge {
  fill: #f5e600;
}

/* docking layout */
main {
  flex: 1;
  min-height: 0;
  display: flex;
}

.dock-left {
  flex: none;
  width: 277px;
  display: flex;
  flex-direction: column;
  background: #eee;
  border-right: 2px solid #c0c0c0;
}

.dock-title {
  display: flex;
  align-items: center;
  justify-content: space-between;
  height: 20px;
  padding: 0 3px 0 4px;
  background: #d9d9d9;
  color: #444;
  line-height: 22px;
}

.dock-title button {
  color: #777;
}

/* properties */
.properties {
  flex: none;
  height: 386px;
  padding-right: 3px;
  border-bottom: 2px solid #c0c0c0;
}

.properties .dock-title {
  margin-right: -3px;
}

.type-selector {
  width: 271px;
  height: 88px;
  margin-left: 2px;
  padding: 0 2px;
  justify-content: flex-start;
  gap: 6px;
  background: #f5f5f5;
  border: 1px solid #b5b5b5;
  border-bottom: 0;
}

.type-selector .thumb {
  display: grid;
  place-items: center;
  width: 82px;
  height: 82px;
  border: 1px solid #b5b5b5;
}

.type-selector > svg {
  margin-left: auto;
  color: #888;
}

.instance {
  display: flex;
  gap: 5px;
  height: 36px;
  margin-left: 2px;
  background: #f5f5f5;
}

.combo {
  display: flex;
  align-items: center;
  color: #888;
}

.combo select {
  flex: 1;
  min-width: 0;
  color: #3c3c3c;
}

.instance .combo {
  width: 175px;
  height: 31px;
  padding: 0 5px 0 4px;
  border-bottom: 2px solid #c8c8c8;
}

.edit-type {
  height: 31px;
  gap: 4px;
}

.props, .tree-wrap {
  display: flex;
  margin-left: 2px;
  background: #fff;
}

.props {
  height: 209px;
}

.props-view {
  flex: 1;
  overflow: hidden;
}

.group {
  display: flex;
  align-items: center;
  justify-content: space-between;
  height: 23px;
  padding: 0 5px 0 2px;
  background: #f2f2f2;
}

.props table {
  width: 100%;
  table-layout: fixed;
  border-collapse: collapse;
}

.props th, .props td {
  height: 24px;
  padding: 0 3px;
  border-right: 1px dotted #ccc;
  border-bottom: 1px dotted #ccc;
  font-weight: normal;
  text-align: left;
  white-space: nowrap;
}

.props th {
  width: 116px;
  padding-left: 10px;
}

.props td {
  width: 117px;
}

.props td:last-child {
  width: auto;
  border-right: 0;
}

.props .field {
  padding: 0 1px;
}

.props .pair {
  display: flex;
  justify-content: space-between;
}

.props .off {
  color: #999;
}

.props .field input {
  display: block;
  width: 100%;
  height: 23px;
  padding-left: 5px;
  border: 1px solid #000;
}

.props .field button {
  width: 100%;
  height: 21px;
  background: #f5f5f5;
  border: 1px solid #b0b0b0;
}

.props-foot {
  display: flex;
  justify-content: space-between;
  padding: 1px 3px 0 2px;
}

.props-foot a {
  color: #0073bb;
  text-decoration: underline;
}

.props-foot button {
  width: 83px;
  height: 24px;
  border: 1px solid #d0d0d0;
  border-radius: 4px;
  color: #aaa;
}

/* scrollbars */
.scroll {
  flex: none;
  display: flex;
  flex-direction: column;
  width: 21px;
  background: #e8e8e8;
  color: #999;
}

.scroll button {
  height: 21px;
  background: #eee;
  border-top: 1px solid #d5d5d5;
}

.scroll button:first-child {
  border-top: 0;
  border-bottom: 1px solid #d5d5d5;
}

.track {
  flex: 1;
  display: flex;
  justify-content: center;
}

.track span {
  width: 7px;
  height: 22px;
  background: #d3d3d3;
  border-radius: 3px;
}

.track .thumb-short {
  height: 33px;
}

.track .thumb-long {
  height: 153px;
  margin-top: 7px;
}

.centered {
  align-items: center;
}

/* project browser */
.browser {
  flex: 1;
  min-height: 0;
  display: flex;
  flex-direction: column;
  padding-bottom: 4px;
}

.browser-body {
  flex: 1;
  min-height: 0;
  display: flex;
  flex-direction: column;
  margin: 0 3px 0 2px;
  background: #fff;
}

.search {
  display: flex;
  align-items: center;
  gap: 11px;
  height: 30px;
  margin: 11px 10px 10px;
  padding-left: 10px;
  border: 1px solid #ddd;
}

.search input {
  flex: 1;
  min-width: 0;
}

.search input::placeholder {
  color: #a0a0a0;
}

.tree-wrap {
  flex: 1;
  min-height: 0;
  margin: 0;
}

.tree {
  flex: 1;
  overflow: hidden;
  color: #4a4a4a;
}

.root, .node, .leaves li {
  display: flex;
  align-items: center;
  height: 25px;
}

.root {
  padding-left: 6px;
  gap: 6px;
}

.root .minus {
  margin-right: 6px;
}

.selected {
  background: #f1f1f1;
  box-shadow: inset 0 0 0 1px #ddd;
}

.minus {
  flex: none;
  width: 10px;
  height: 10px;
  background: linear-gradient(#888, #888) center / 10px 2px no-repeat;
}

.plus {
  background: linear-gradient(#888, #888) center / 10px 2px no-repeat, linear-gradient(#888, #888) center / 2px 10px no-repeat;
}

.branch {
  padding-left: 10px;
}

.branch li {
  position: relative;
}

/* dashed connector lines */
.branch li::before, .branch li::after {
  content: "";
  position: absolute;
  left: 0;
  top: 0;
  height: 100%;
  border-left: 1px dashed #b5b5b5;
}

.branch li::after {
  top: 12px;
  width: 11px;
  height: 0;
  border-left: 0;
  border-top: 1px dashed #b5b5b5;
}

.branch li:last-child::before {
  height: 12px;
}

.branch .leaves li::after {
  width: 31px;
}

.node {
  gap: 11px;
  padding-left: 16px;
}

.leaves {
  padding-left: 20px;
}

.leaves li {
  gap: 5px;
  padding-left: 38px;
}

.current {
  font-weight: bold;
}

/* drawing area */
.workspace {
  flex: 1;
  min-width: 0;
  display: flex;
  flex-direction: column;
  padding-bottom: 2px;
}

.doc-tabs {
  flex: none;
  display: flex;
  justify-content: space-between;
  height: 25px;
  padding-right: 7px;
  background: #cbcbcb;
}

.doc-tab {
  display: flex;
  align-items: center;
  width: 160px;
  padding: 0 7px 0 6px;
  background: #fff;
  font-weight: bold;
}

.doc-tab span {
  margin-left: 9px;
}

.doc-tab button {
  margin-left: auto;
  color: #777;
}

.canvas-row {
  flex: 1;
  min-height: 0;
  display: flex;
  padding-right: 3px;
}

.canvas {
  position: relative;
  flex: 1;
  min-width: 0;
}

.canvas > svg {
  width: 100%;
  height: 100%;
}

.canvas-row .scroll {
  width: 22px;
  margin-top: 2px;
  border-right: 1px solid #c8c8c8;
}

/* floats over the drawing */
.navbar {
  position: absolute;
  top: 2px;
  right: 0;
  width: 36px;
  height: 118px;
  display: flex;
  flex-direction: column;
  align-items: center;
  gap: 6px;
  padding: 2px;
  background: #f5f5f5;
  border: 2px solid #c4c4c4;
  border-radius: 6px;
  color: #888;
}

.navbar .corner {
  align-self: flex-end;
}

.navbar .end {
  margin-top: auto;
}

.navbar hr {
  width: 26px;
  margin: 0;
  border: 0;
  border-top: 1px solid #bbb;
}

.view-bar {
  flex: none;
  display: flex;
  height: 22px;
  margin: 0 3px 0 2px;
  background: #f4f4f4;
  border-bottom: 1px solid #c0c0c0;
}

.scale {
  width: 91px;
  padding-left: 4px;
  font-size: 13px;
}

.vb {
  width: 30px;
}

.vb:nth-child(12) {
  margin-right: -1px;
}

.teal {
  color: #5cc4d1;
}

.amber {
  color: #f7b743;
}

.hs {
  width: 21px;
  background: #eaeaea;
  color: #999;
}

.hs-track {
  flex: 1;
  display: flex;
  align-items: center;
  justify-content: center;
  background: #e8e8e8;
  border-left: 1px solid #d5d5d5;
  border-right: 1px solid #d5d5d5;
}

.hs-track span {
  width: 21px;
  height: 7px;
  border-radius: 3px;
  background: #d3d3d3;
}

/* Crosswalk panel */
.dock-right {
  flex: none;
  width: 333px;
  display: flex;
  flex-direction: column;
  background: #eee;
  border-left: 2px solid #c0c0c0;
}

.dock-right .dock-title {
  flex: none;
  padding-right: 1px;
}

.csi {
  flex: 1;
  min-height: 0;
  display: flex;
  flex-direction: column;
  margin: 0 1px 3px;
  padding: 18px 4px 10px 5px;
  background: #fff;
  border: 3px solid #000;
  color: #111;
}

.csi a {
  color: #0000f0;
}

.csi h3 {
  margin: 100px 0 25px 6px;
  color: #000;
  font-size: 16px;
  font-weight: bold;
  line-height: 24px;
}

.lookup-form {
  display: grid;
  grid-template-columns: 150px 62px;
  column-gap: 47px;
  row-gap: 2px;
  padding-left: 2px;
}

.lookup-form p {
  padding-left: 4px;
}

.lookup-form > a {
  padding-left: 17px;
}

.lookup-form button {
  height: 25px;
  background: #ddd;
  border: 1px solid #707070;
}

.query {
  position: relative;
}

.query input {
  display: block;
  width: 100%;
  height: 25px;
  padding: 0 3px 2px;
  border: 1px solid #abadb3;
}

/* yellow marker stroke across the field */
.query::after {
  content: "";
  position: absolute;
  inset: -4px -1px 3px 1px;
  background: #ffe600;
  mix-blend-mode: multiply;
  clip-path: polygon(0 1px, 30% 1px, 40% 0, 100% 0, 100% 26px, 60% 26px, 40% 25px, 0 25px);
}

.note {
  margin: 22px 0 0 6px;
  color: #f00;
  font: 14px/20px "Liberation Serif", serif;
}

.results {
  flex: 1;
  min-height: 0;
  margin-bottom: 58px;
  padding-right: 6px;
  background: #f0f0f0;
  border: 1px solid #ccc;
}

.results table {
  width: 100%;
  border-collapse: collapse;
  background: #fff;
}

.results th, .results td {
  height: 31px;
  padding: 0 1px;
  border-right: 1px solid #ccc;
  border-bottom: 1px solid #ccc;
  text-align: left;
  white-space: nowrap;
}

.results th {
  height: 30px;
  padding: 0 6px;
  background: linear-gradient(#fff 40%, #f3f4f6 45%, #f0f1f4);
  border-right-color: #ddd;
  font-weight: normal;
}

.results td:first-child {
  width: 87px;
  font-size: 15px;
  font-weight: bold;
}

.results td:nth-child(2) {
  width: 200px;
  padding-left: 2px;
}

.results th:last-child, .results td:last-child {
  padding: 0;
  border-right: 0;
}

.csi footer {
  color: #000;
  font-size: 11px;
  padding-left: 1px;
}

/* status bar */
.status {
  flex: none;
  display: flex;
  align-items: center;
  height: 32px;
  padding: 3px 78px 0 2px;
  background: #f4f4f4;
  border-top: 1px solid #c0c0c0;
  border-bottom: 1px solid #ddd;
}

.ready {
  width: 686px;
}

.worksets, .selection {
  display: flex;
  align-items: center;
  height: 27px;
}

.worksets .combo {
  width: 266px;
  height: 27px;
  padding-right: 7px;
  border-bottom: 2px solid #d9d9d9;
  color: #bbb;
}

.worksets .requests {
  margin: 0 29px 0 7px;
  color: #999;
}

.worksets .opt {
  margin-right: 9px;
}

.worksets .model {
  width: 257px;
  padding-left: 3px;
}

.worksets .model select {
  color: #aaa;
}

.selection {
  margin-left: auto;
}

.selection button {
  width: 30px;
}

.selection .filter {
  width: auto;
  margin-left: 4px;
}
```
